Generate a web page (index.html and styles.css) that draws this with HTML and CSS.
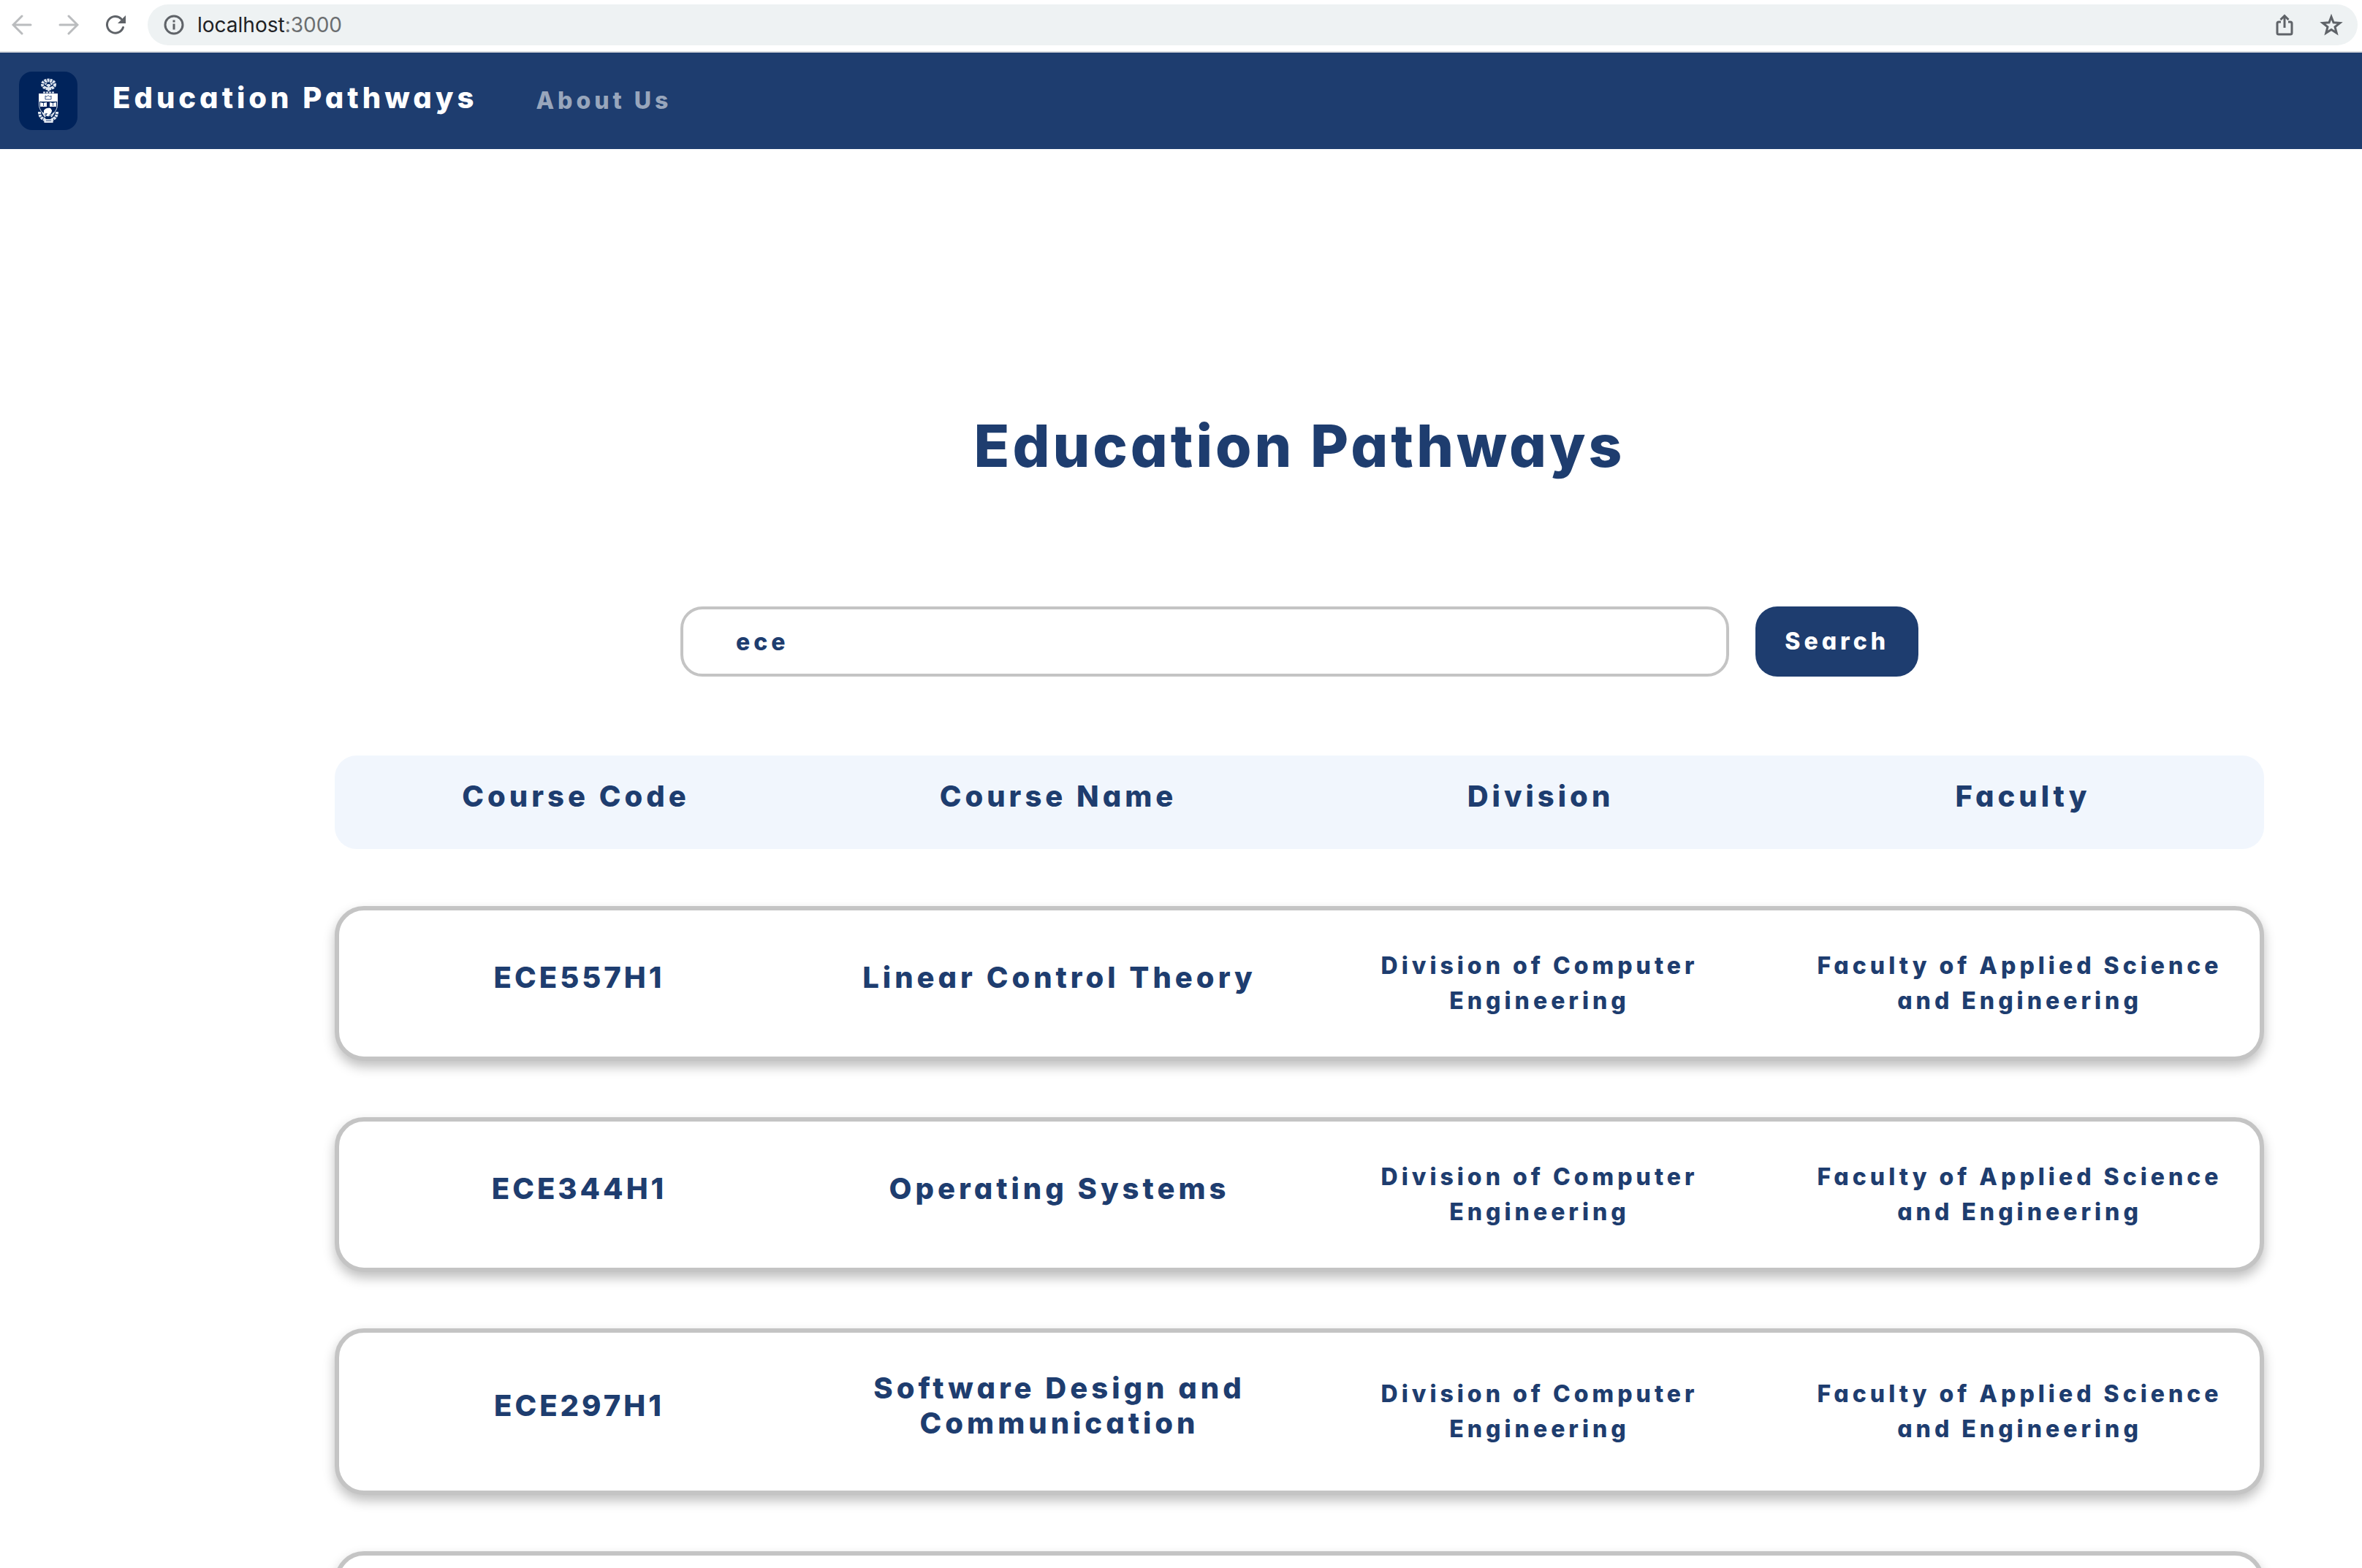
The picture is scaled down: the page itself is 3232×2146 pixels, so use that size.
FILE: index.html
```html
<!DOCTYPE html>
<html lang="en">
<head>
<meta charset="utf-8">
<title>Education Pathways</title>
<link rel="stylesheet" href="styles.css">
</head>
<body>
<div class="toolbar">
  <button class="tool tool-off" type="button" aria-label="Back">
    <svg width="28" height="28" viewBox="0 0 28 28" fill="none" stroke="currentColor" stroke-width="3" stroke-linecap="round"><path d="M26 14H3M14 2 2 14l12 12"/></svg>
  </button>
  <button class="tool tool-off" type="button" aria-label="Forward">
    <svg width="28" height="28" viewBox="0 0 28 28" fill="none" stroke="currentColor" stroke-width="3" stroke-linecap="round"><path d="M2 14h23M14 2l12 12-12 12"/></svg>
  </button>
  <button class="tool" type="button" aria-label="Reload">
    <svg width="28" height="28" viewBox="0 0 28 28"><path d="M24.500 17.500A11.300 11.300 0 1 1 22 6" fill="none" stroke="currentColor" stroke-width="3" stroke-linecap="round"/><path d="M28 1v11H17z" fill="currentColor"/></svg>
  </button>
  <div class="address">
    <svg class="address-icon" width="28" height="28" viewBox="0 0 28 28"><circle cx="14" cy="14" r="12" fill="none" stroke="currentColor" stroke-width="3"/><path d="M12.500 7.500h3v3h-3zM12.500 12.500h3v8h-3z" fill="currentColor"/></svg>
    <span class="url">localhost<span class="port">:3000</span></span>
    <button class="tool" type="button" aria-label="Share">
      <svg width="28" height="32" viewBox="0 0 28 32" fill="none" stroke="currentColor" stroke-width="3"><path d="M9 12H6a2 2 0 0 0-2 2v13a2 2 0 0 0 2 2h16a2 2 0 0 0 2-2V14a2 2 0 0 0-2-2h-3M14 20V4M8.500 9 14 3.500 19.500 9"/></svg>
    </button>
    <button class="tool" type="button" aria-label="Bookmark">
      <svg width="32" height="32" viewBox="0 0 32 32" fill="none" stroke="currentColor" stroke-width="3"><path d="m16 5 3 7.800 8.800.6-6.800 5.500 2.200 8.200L16 22.600l-7.200 4.500 2.200-8.200-6.800-5.500 8.800-.6z"/></svg>
    </button>
  </div>
</div>

<nav class="navbar">
  <a class="brand" href="#">
    <svg class="crest" width="80" height="80" viewBox="0 0 80 80">
      <rect width="80" height="80" rx="18" fill="#00235b"/>
      <g fill="none" stroke="#dfe6f0">
        <ellipse cx="40.500" cy="17.500" rx="8.500" ry="6" stroke-width="4" stroke-dasharray="3 1"/>
        <ellipse cx="40.500" cy="16" rx="4" ry="3" stroke-width="3" stroke-dasharray="2 1"/>
        <path d="M40.500 17v10M35 21l5.500 3 5.500-3" stroke-width="2"/>
        <path d="M33 28.500h15" stroke-width="2" stroke-dasharray="3 1"/>
        <path d="M27.500 31v14c0 8 5 13 12.500 16 7.500-3 12.500-8 12.500-16V31" stroke-width="1"/>
        <path d="M28 55c0 6 3 10 8 11M52 55c0 6-3 10-8 11" stroke-width="4" stroke-dasharray="3 1"/>
        <path d="M32 56l4 6M48 56l-4 6" stroke-width="2"/>
      </g>
      <path d="M27 30h26v11H27zM29 42l4 1 5-1v6h-9zM42 42l4 1 5-1v6h-9z" fill="#fff"/>
      <path d="M34 53c2-3 6-4 9-3l2 3c0 3-3 7-6 8l-2-1 2-3-5 1z" fill="#fff"/>
      <path d="M33.500 62 37 65h7l3.500-3-1 8h-12z" fill="#dfe6f0"/>
      <path d="M36 33l2 1.500 2-2 2 2 2-1.500v5h-8zM33.500 43v4M46.500 43v4M37 67h7" fill="none" stroke="#3b5688"/>
    </svg>
    <span class="brand-name">Education Pathways</span>
  </a>
  <a class="nav-link" href="#">About Us</a>
</nav>

<main class="page">
  <h1 class="title">Education Pathways</h1>
  <form class="search">
    <input class="search-box" type="text" value="ece" aria-label="Search courses">
    <button class="search-button" type="submit">Search</button>
  </form>

  <table class="results">
    <thead>
      <tr class="head-row">
        <th scope="col">Course Code</th>
        <th scope="col">Course Name</th>
        <th scope="col">Division</th>
        <th scope="col">Faculty</th>
      </tr>
    </thead>
    <tbody>
      <tr class="card">
        <td class="code">ECE557H1</td>
        <td class="name">Linear Control Theory</td>
        <td class="unit">Division of Computer Engineering</td>
        <td class="unit">Faculty of Applied Science and Engineering</td>
      </tr>
      <tr class="card">
        <td class="code">ECE344H1</td>
        <td class="name">Operating Systems</td>
        <td class="unit">Division of Computer Engineering</td>
        <td class="unit">Faculty of Applied Science and Engineering</td>
      </tr>
      <tr class="card">
        <td class="code">ECE297H1</td>
        <td class="name">Software Design and Communication</td>
        <td class="unit">Division of Computer Engineering</td>
        <td class="unit">Faculty of Applied Science and Engineering</td>
      </tr>
      <tr class="card">
        <td class="code"></td>
        <td class="name"></td>
        <td class="unit"></td>
        <td class="unit"></td>
      </tr>
    </tbody>
  </table>
</main>
</body>
</html>
```
FILE: styles.css
```css
* { box-sizing: border-box; }

body {
  margin: 0;
  height: 100vh;
  overflow: hidden;
  background: #fff;
  color: #1e3d6f;
  font-family: Inter, "Liberation Sans", sans-serif;
  font-size: 32px;
  font-weight: 800;
  line-height: 48px;
  letter-spacing: 5px;
  font-feature-settings: "cv11" 1;
}

button, input { font: inherit; letter-spacing: inherit; font-feature-settings: inherit; }
a { text-decoration: none; }

/* Browser toolbar */
.toolbar {
  display: flex;
  align-items: center;
  gap: 36px;
  height: 72px;
  padding: 0 6px 2px 16px;
  border-bottom: 2px solid #dadce0;
}
.tool {
  display: flex;
  padding: 0;
  border: 0;
  background: none;
  color: #5f6368;
}
.tool-off { color: #babcbe; }
.address {
  display: flex;
  flex: 1;
  align-items: center;
  gap: 34px;
  height: 56px;
  margin-left: -6px;
  padding: 0 20px 0 22px;
  border-radius: 28px;
  background: #eef2f3;
}
.address-icon { margin-right: -16px; color: #5f6368; }
.url {
  flex: 1;
  color: #202124;
  font-size: 28px;
  font-weight: 400;
  letter-spacing: 0;
  font-feature-settings: normal;
}
.port { color: #6b6e70; }

/* Navigation */
.navbar {
  display: flex;
  align-items: center;
  gap: 80px;
  height: 132px;
  padding: 0 26px;
  background: #1e3d6f;
}
.brand {
  display: flex;
  align-items: center;
  gap: 48px;
  color: #fff;
  font-size: 40px;
}
.brand-name { padding-bottom: 8px; }
.nav-link { color: #98a6bc; }

/* Page */
.page { padding: 358px 134px 0 458px; }
.title {
  margin: 0;
  font-size: 80px;
  font-weight: inherit;
  line-height: 96px;
  letter-spacing: 4px;
  text-align: center;
}
.search {
  display: flex;
  gap: 36px;
  max-width: 1694px;
  margin: 172px auto 108px;
}
.search-box {
  flex: 1;
  min-width: 0;
  height: 96px;
  padding: 0 72px;
  border: 4px solid #c4c4c4;
  border-radius: 30px;
  background: #fff;
  color: #1e3d6f;
}
.search-button {
  height: 96px;
  padding: 0 40px;
  border: 0;
  border-radius: 30px;
  background: #1e3d6f;
  color: #fff;
}

/* Results */
.results, .results thead { display: block; }
.results tbody {
  display: flex;
  flex-direction: column;
  gap: 77px;
  margin-top: 78px;
}
.head-row, .card {
  display: grid;
  grid-template-columns: repeat(4, 1fr);
  text-align: center;
}
.head-row {
  padding: 32px 0 48px;
  border-radius: 30px;
  background: #f1f6fd;
  font-size: 40px;
}
.results th, .results td { padding: 0 24px; }
.results th { font-weight: inherit; }
.card {
  align-items: center;
  min-height: 212px;
  padding: 52px 0;
  border: 6px solid #c4c4c4;
  border-radius: 40px;
  background: #fff;
  box-shadow: 0 8px 16px rgba(0, 0, 0, 0.25);
}
.results .code, .results .name {
  padding-bottom: 16px;
  font-size: 40px;
}
.code { letter-spacing: 4px; }
```
